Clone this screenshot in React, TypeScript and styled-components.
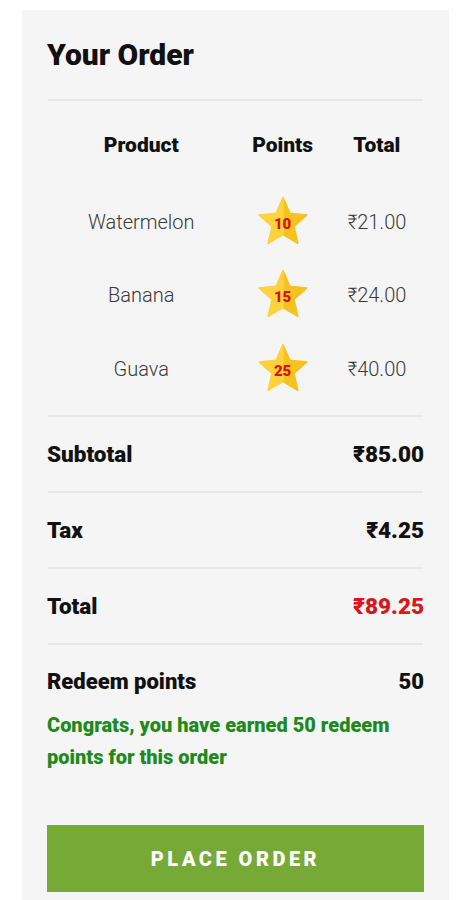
import { FC } from "react";
import styled, { createGlobalStyle } from "styled-components";

interface Item {
  name: string;
  points: number;
  price: string;
}

const items: Item[] = [
  { name: "Watermelon", points: 10, price: "₹21.00" },
  { name: "Banana", points: 15, price: "₹24.00" },
  { name: "Guava", points: 25, price: "₹40.00" },
];

const Star: FC<{ value: number }> = ({ value }) => {
  return (
    <StarWrap>
      <svg width="54" height="52" viewBox="0 0 52 50">
        <path
          d="M26 1.5 L32.6 16.6 L49 18.2 L36.6 29.2 L40.3 45.6 L26 37.1 Z"
          fill="#f6c21f"
          stroke="#f6c21f"
          strokeWidth="1.5"
          strokeLinejoin="round"
        />
        <path
          d="M26 1.5 L19.4 16.6 L3 18.2 L15.4 29.2 L11.7 45.6 L26 37.1 Z"
          fill="#fdd23c"
          stroke="#fdd23c"
          strokeWidth="1.5"
          strokeLinejoin="round"
        />
      </svg>
      <StarValue>{value}</StarValue>
    </StarWrap>
  );
};

const App: FC = () => {
  return (
    <>
      <GlobalStyle />
      <Panel>
        <Title>Your Order</Title>
        <Divider />
        <ProductTable>
          <HeadCell>Product</HeadCell>
          <HeadCell>Points</HeadCell>
          <HeadCell>Total</HeadCell>
          {items.map((item) => (
            <ProductRow key={item.name}>
              <Cell>{item.name}</Cell>
              <Cell>
                <Star value={item.points} />
              </Cell>
              <Cell>{item.price}</Cell>
            </ProductRow>
          ))}
        </ProductTable>
        <Divider />
        <SummaryRow>
          <span>Subtotal</span>
          <span>₹85.00</span>
        </SummaryRow>
        <Divider />
        <SummaryRow>
          <span>Tax</span>
          <span>₹4.25</span>
        </SummaryRow>
        <Divider />
        <SummaryRow>
          <span>Total</span>
          <Amount highlight>₹89.25</Amount>
        </SummaryRow>
        <Divider />
        <RedeemRow>
          <span>Redeem points</span>
          <span>50</span>
        </RedeemRow>
        <Congrats>Congrats, you have earned 50 redeem points for this order</Congrats>
        <PlaceOrder>PLACE ORDER</PlaceOrder>
      </Panel>
    </>
  );
};

export default App;

const GlobalStyle = createGlobalStyle`
  body {
    margin: 0;
    background: #ffffff;
    font-family: "Roboto", "Liberation Sans", sans-serif;
  }
`;

const Panel = styled.div`
  margin: 10px 20px 0 22px;
  min-height: 890px;
  box-sizing: border-box;
  background-color: #f5f5f5;
  padding: 29px 25px 8px 25px;
`;

const Title = styled.h1`
  margin: 0 0 28px;
  font-size: 30px;
  line-height: 32px;
  font-weight: 900;
  color: #111;
`;

const Divider = styled.div`
  height: 2px;
  margin: 0 1px;
  background-color: #e8e8e8;
`;

const ProductTable = styled.div`
  display: grid;
  grid-template-columns: 2fr 1fr 1fr;
  grid-template-rows: 84px repeat(3, 73.5px);
  padding-bottom: 9.5px;
`;

const HeadCell = styled.div`
  display: flex;
  align-items: center;
  justify-content: center;
  padding-top: 4px;
  font-size: 21px;
  font-weight: 900;
  color: #111;
`;

const ProductRow = styled.div`
  display: contents;
`;

const Cell = styled.div`
  display: flex;
  align-items: center;
  justify-content: center;
  font-size: 20px;
  font-weight: 300;
  color: #3a3a3a;
`;

const StarWrap = styled.div`
  position: relative;
  width: 54px;
  height: 52px;

  svg {
    display: block;
  }
`;

const StarValue = styled.span`
  position: absolute;
  left: 0;
  right: 0;
  top: 19px;
  text-align: center;
  font-size: 15px;
  font-weight: 900;
  color: #d0160f;
`;

const SummaryRow = styled.div`
  display: flex;
  justify-content: space-between;
  align-items: center;
  height: 74px;
  font-size: 22.5px;
  font-weight: 900;
  color: #111;
`;

const Amount = styled.span<{ highlight?: boolean }>`
  color: ${(props) => (props.highlight ? "#d9161c" : "#111")};
`;

const RedeemRow = styled.div`
  display: flex;
  justify-content: space-between;
  align-items: center;
  padding-top: 25px;
  line-height: 24px;
  font-size: 22px;
  font-weight: 900;
  color: #111;
`;

const Congrats = styled.p`
  margin: 15px 0 0;
  font-size: 20px;
  line-height: 32px;
  font-weight: 900;
  color: #1e8a1e;
`;

const PlaceOrder = styled.button`
  display: block;
  width: 100%;
  height: 67px;
  margin-top: 52px;
  border: none;
  background-color: #77a936;
  color: #fff;
  font-family: inherit;
  font-size: 20px;
  font-weight: 900;
  letter-spacing: 3.5px;
`;
